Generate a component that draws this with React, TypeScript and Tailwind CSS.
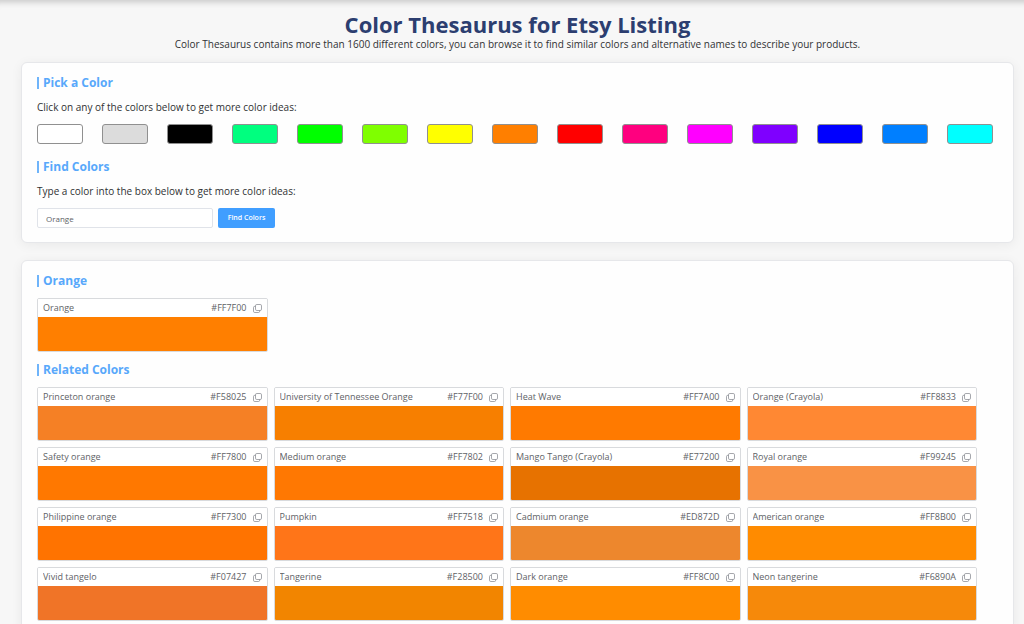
import React, { useState } from 'react';

interface NamedColor {
  name: string;
  hex: string;
}

const PALETTE: NamedColor[] = [
  { name: 'White', hex: '#FFFFFF' },
  { name: 'Gray', hex: '#DCDCDC' },
  { name: 'Black', hex: '#000000' },
  { name: 'Spring green', hex: '#00FF7F' },
  { name: 'Green', hex: '#00FF00' },
  { name: 'Chartreuse', hex: '#7FFF00' },
  { name: 'Yellow', hex: '#FFFF00' },
  { name: 'Orange', hex: '#FF7F00' },
  { name: 'Red', hex: '#FF0000' },
  { name: 'Rose', hex: '#FF007F' },
  { name: 'Magenta', hex: '#FF00FF' },
  { name: 'Violet', hex: '#7F00FF' },
  { name: 'Blue', hex: '#0000FF' },
  { name: 'Azure', hex: '#007FFF' },
  { name: 'Cyan', hex: '#00FFFF' },
];

const RELATED: NamedColor[] = [
  { name: 'Princeton orange', hex: '#F58025' },
  { name: 'University of Tennessee Orange', hex: '#F77F00' },
  { name: 'Heat Wave', hex: '#FF7A00' },
  { name: 'Orange (Crayola)', hex: '#FF8833' },
  { name: 'Safety orange', hex: '#FF7800' },
  { name: 'Medium orange', hex: '#FF7802' },
  { name: 'Mango Tango (Crayola)', hex: '#E77200' },
  { name: 'Royal orange', hex: '#F99245' },
  { name: 'Philippine orange', hex: '#FF7300' },
  { name: 'Pumpkin', hex: '#FF7518' },
  { name: 'Cadmium orange', hex: '#ED872D' },
  { name: 'American orange', hex: '#FF8B00' },
  { name: 'Vivid tangelo', hex: '#F07427' },
  { name: 'Tangerine', hex: '#F28500' },
  { name: 'Dark orange', hex: '#FF8C00' },
  { name: 'Neon tangerine', hex: '#F6890A' },
];

const CopyIcon = () => (
  <svg viewBox="0 0 9 9" className="w-[9px] h-[9px]" fill="none" stroke="currentColor" strokeWidth="0.7">
    <rect x="2.5" y="0.5" width="6" height="6" rx="1.3" />
    <path d="M2.5 2.3H1.8a1.3 1.3 0 0 0-1.3 1.3v3.6a1.3 1.3 0 0 0 1.3 1.3h3.6a1.3 1.3 0 0 0 1.3-1.3v-.7" />
  </svg>
);

const SectionTitle = ({ children }: { children: React.ReactNode }) => (
  <h2 className="flex items-center gap-1 h-4 text-[12px] leading-4 font-bold text-[#58a8fb]">
    <span className="w-0.5 h-3 bg-[#6fb4fa]" />
    {children}
  </h2>
);

const Panel = ({ children }: { children: React.ReactNode }) => (
  <section className="bg-[#fefefe] border border-[#e6e7ea] rounded-md shadow-[0_2px_12px_rgba(0,0,0,0.06)] pt-3 pl-[15px] pr-[14px] pb-[14px]">
    {children}
  </section>
);

const ColorCard = ({ name, hex }: NamedColor) => (
  <article className="border border-[#d8dadd] rounded-xs overflow-hidden">
    <div className="flex items-center h-[18px] px-[5px] text-[9px] text-[#606266] bg-white">
      <span className="flex-1 truncate">{name}</span>
      <span>{hex}</span>
      <button
        type="button"
        aria-label={`Copy ${hex}`}
        className="ml-1.5 text-[#808389] cursor-pointer"
        onClick={() => navigator.clipboard?.writeText(hex)}
      >
        <CopyIcon />
      </button>
    </div>
    <div className="h-[34px]" style={{ backgroundColor: hex }} />
  </article>
);

export default function App() {
  const [query, setQuery] = useState('Orange');

  return (
    <main className="min-h-screen bg-[#f7f7f7] pl-[21px] pr-[10px] pt-2.5 font-['Open_Sans','Noto_Sans',sans-serif] text-[#303133] shadow-[inset_0_8px_6px_-6px_rgba(0,0,0,0.2)]">
      <header className="text-center mb-3">
        <h1 className="text-[22px] leading-7 font-bold text-[#2c3e70]">Color Thesaurus for Etsy Listing</h1>
        <p className="text-[10px] leading-3">
          Color Thesaurus contains more than 1600 different colors, you can browse it to find similar colors and alternative names to describe your products.
        </p>
      </header>

      <div className="flex flex-col gap-[17px]">
        <Panel>
          <SectionTitle>Pick a Color</SectionTitle>
          <p className="mt-2 text-[10px] leading-4">Click on any of the colors below to get more color ideas:</p>
          <div className="flex justify-between mt-[9px] pr-[6px]">
            {PALETTE.map((c) => (
              <button
                key={c.hex}
                type="button"
                aria-label={c.name}
                onClick={() => setQuery(c.name)}
                className="w-[46px] h-5 rounded-[3px] border border-[#909090] cursor-pointer"
                style={{ backgroundColor: c.hex }}
              />
            ))}
          </div>

          <div className="mt-[15px]">
            <SectionTitle>Find Colors</SectionTitle>
          </div>
          <label htmlFor="color-query" className="block mt-2 text-[10px] leading-4">
            Type a color into the box below to get more color ideas:
          </label>
          <form className="flex gap-[5px] mt-[9px]" onSubmit={(e) => e.preventDefault()}>
            <input
              id="color-query"
              type="text"
              value={query}
              onChange={(e) => setQuery(e.target.value)}
              className="w-44 h-5 px-2 bg-white border border-[#e0e3e9] rounded-xs text-[8px] text-[#606266] outline-none"
            />
            <button type="submit" className="h-5 w-[57px] bg-[#409eff] rounded-xs text-[7px] leading-5 font-semibold text-white cursor-pointer">
              Find Colors
            </button>
          </form>
        </Panel>

        <Panel>
          <SectionTitle>Orange</SectionTitle>
          <div className="grid grid-cols-4 gap-1.5 mt-[9px] pr-[22px]">
            <ColorCard name="Orange" hex="#FF7F00" />
          </div>

          <div className="mt-[10px]">
            <SectionTitle>Related Colors</SectionTitle>
          </div>
          <div className="grid grid-cols-4 gap-1.5 mt-[9px] pr-[22px]">
            {RELATED.map((c) => (
              <ColorCard key={c.hex} {...c} />
            ))}
          </div>
        </Panel>
      </div>
    </main>
  );
}
